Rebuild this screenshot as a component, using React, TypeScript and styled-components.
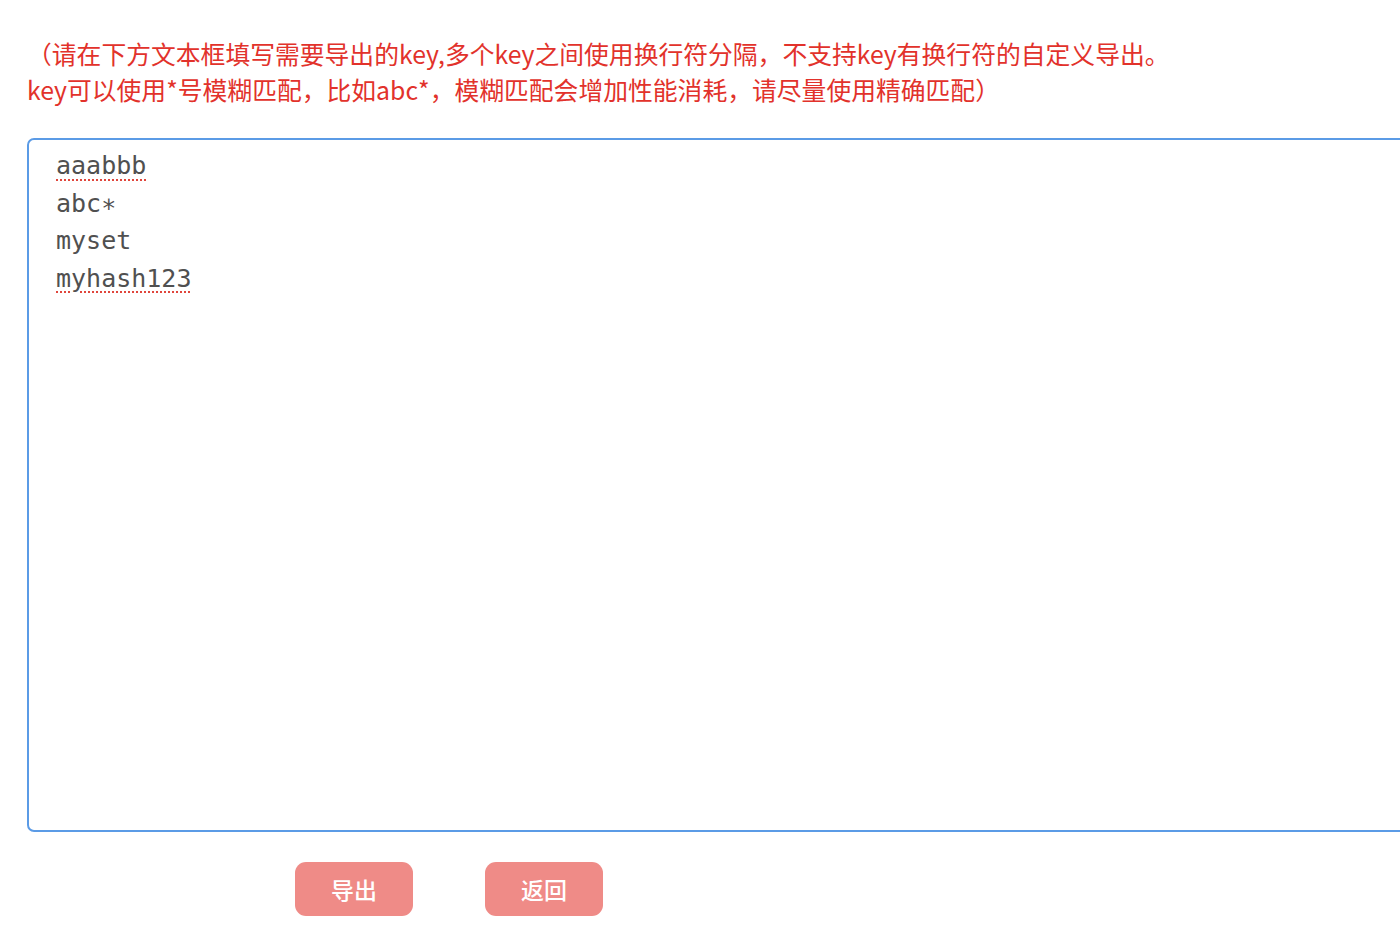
import styled, { createGlobalStyle } from "styled-components";

const GlobalStyle = createGlobalStyle`
  html, body {
    margin: 0;
    padding: 0;
    background: #ffffff;
    overflow: hidden;
  }
`;

const Page = styled.div`
  width: 1400px;
  height: 932px;
  box-sizing: border-box;
  padding: 35px 0 0 27px;
  font-family: "Noto Sans CJK SC", "Noto Sans", sans-serif;
  overflow: hidden;
`;

const Notice = styled.p`
  margin: 0;
  color: #e2322b;
  font-size: 24.8px;
  line-height: 36px;
  white-space: nowrap;
`;

const Editor = styled.div`
  margin-top: 31px;
  width: 1420px;
  height: 694px;
  box-sizing: border-box;
  border: 2px solid #5b9be6;
  border-radius: 7px;
  padding: 7px 27px;
  font-family: "DejaVu Sans Mono", "Liberation Mono", monospace;
  font-size: 25px;
  line-height: 37.5px;
  color: #505050;
`;

const Line = styled.div<{ $misspelled?: boolean }>`
  white-space: pre;
  text-decoration: ${(p) => (p.$misspelled ? "underline dotted #e0463c" : "none")};
  text-decoration-thickness: 2px;
  text-underline-offset: 5px;
  width: fit-content;
`;

const Actions = styled.div`
  display: flex;
  gap: 72px;
  margin: 30px 0 0 268px;
`;

const Button = styled.button`
  width: 118px;
  height: 54px;
  border: none;
  border-radius: 11px;
  background: #ef8b87;
  color: #ffffff;
  font-family: "Noto Sans CJK SC", sans-serif;
  font-size: 23px;
  font-weight: 500;
  cursor: pointer;
`;

const keys = [
  { text: "aaabbb", bad: true },
  { text: "abc\u2217", bad: false },
  { text: "myset", bad: false },
  { text: "myhash123", bad: true },
];

const App = () => {
  return (
    <>
      <GlobalStyle />
      <Page>
        <Notice>
          （请在下方文本框填写需要导出的key,多个key之间使用换行符分隔，不支持key有换行符的自定义导出。
          <br />
          key可以使用*号模糊匹配，比如abc*，模糊匹配会增加性能消耗，请尽量使用精确匹配）
        </Notice>
        <Editor>
          {keys.map((k) => (
            <Line key={k.text} $misspelled={k.bad}>
              {k.text}
            </Line>
          ))}
        </Editor>
        <Actions>
          <Button>导出</Button>
          <Button>返回</Button>
        </Actions>
      </Page>
    </>
  );
};

export default App;
